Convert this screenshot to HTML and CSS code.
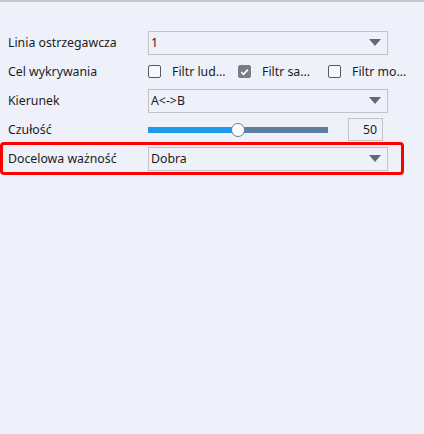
FILE: index.html
```html
<!DOCTYPE html>
<html>
<head>
<meta charset="utf-8">
<link rel="stylesheet" href="styles.css">
</head>
<body>
<div class="page">
  <div class="form">
    <div class="row">
      <div class="label">Linia ostrzegawcza</div>
      <div class="select"><span>1</span><i class="arrow"></i></div>
    </div>
    <div class="row">
      <div class="label">Cel wykrywania</div>
      <div class="checks">
        <label class="check"><span class="box"></span><span>Filtr lud...</span></label>
        <label class="check"><span class="box on"><svg viewBox="0 0 12 12" width="12" height="12"><path d="M2.5 6.2 L5 8.6 L9.6 3.4" fill="none" stroke="#fff" stroke-width="1.8"/></svg></span><span>Filtr sa...</span></label>
        <label class="check"><span class="box"></span><span>Filtr mo...</span></label>
      </div>
    </div>
    <div class="row">
      <div class="label">Kierunek</div>
      <div class="select"><span>A&lt;-&gt;B</span><i class="arrow"></i></div>
    </div>
    <div class="row">
      <div class="label">Czułość</div>
      <div class="slider">
        <div class="fill" style="width:50%"></div>
        <div class="thumb" style="left:50%"></div>
      </div>
      <div class="num">50</div>
    </div>
    <div class="row highlight">
      <div class="label">Docelowa ważność</div>
      <div class="select"><span>Dobra</span><i class="arrow"></i></div>
    </div>
  </div>
</div>
</body>
</html>
```
FILE: styles.css
```css
html, body {
  margin: 0;
  padding: 0;
}
body {
  background: #eef1f9;
  font-family: "Noto Sans", "Open Sans", sans-serif;
  font-size: 12.3px;
  color: #1c1c1c;
  width: 424px;
  height: 434px;
  overflow: hidden;
}
.page {
  border-top: 2px solid #c6c6ca;
  height: 432px;
}
.form {
  padding: 26px 0 0 8px;
  display: flex;
  flex-direction: column;
}
.row {
  height: 29px;
  display: flex;
  align-items: center;
  position: relative;
}
.label {
  width: 140px;
  flex: none;
  white-space: nowrap;
}
.select {
  width: 240px;
  height: 24px;
  border: 1px solid #c3c3c6;
  display: flex;
  align-items: center;
  justify-content: space-between;
  padding: 0 6px 0 2px;
  box-sizing: border-box;
}
.arrow {
  width: 0;
  height: 0;
  border-left: 6px solid transparent;
  border-right: 6px solid transparent;
  border-top: 7px solid #5e6b7b;
}
.checks {
  display: flex;
}
.check {
  display: flex;
  align-items: center;
  width: 90px;
  white-space: nowrap;
}
.box {
  width: 11px;
  height: 11px;
  border: 1px solid #555a60;
  border-radius: 2px;
  margin-right: 11px;
  display: flex;
  align-items: center;
  justify-content: center;
  background: #f7f8fb;
}
.box.on {
  background: #7b7d80;
  border-color: #7b7d80;
}
.slider {
  width: 180px;
  height: 6px;
  background: #5d7f9f;
  position: relative;
  margin-top: 1px;
}
.fill {
  height: 100%;
  background: #1e9be8;
}
.thumb {
  position: absolute;
  top: 50%;
  width: 12px;
  height: 12px;
  border: 1px solid #5d7f9f;
  border-radius: 50%;
  background: #fff;
  transform: translate(-50%, -50%);
}
.num {
  margin-left: 20px;
  width: 35px;
  height: 23px;
  border: 1px solid #c3c3c6;
  display: flex;
  align-items: center;
  justify-content: flex-end;
  padding-right: 5px;
  box-sizing: border-box;
}
.highlight::after {
  content: "";
  position: absolute;
  left: -8px;
  top: -2px;
  width: 404px;
  height: 33px;
  border: 3px solid #ff0000;
  border-radius: 4px;
  box-sizing: border-box;
}
```
